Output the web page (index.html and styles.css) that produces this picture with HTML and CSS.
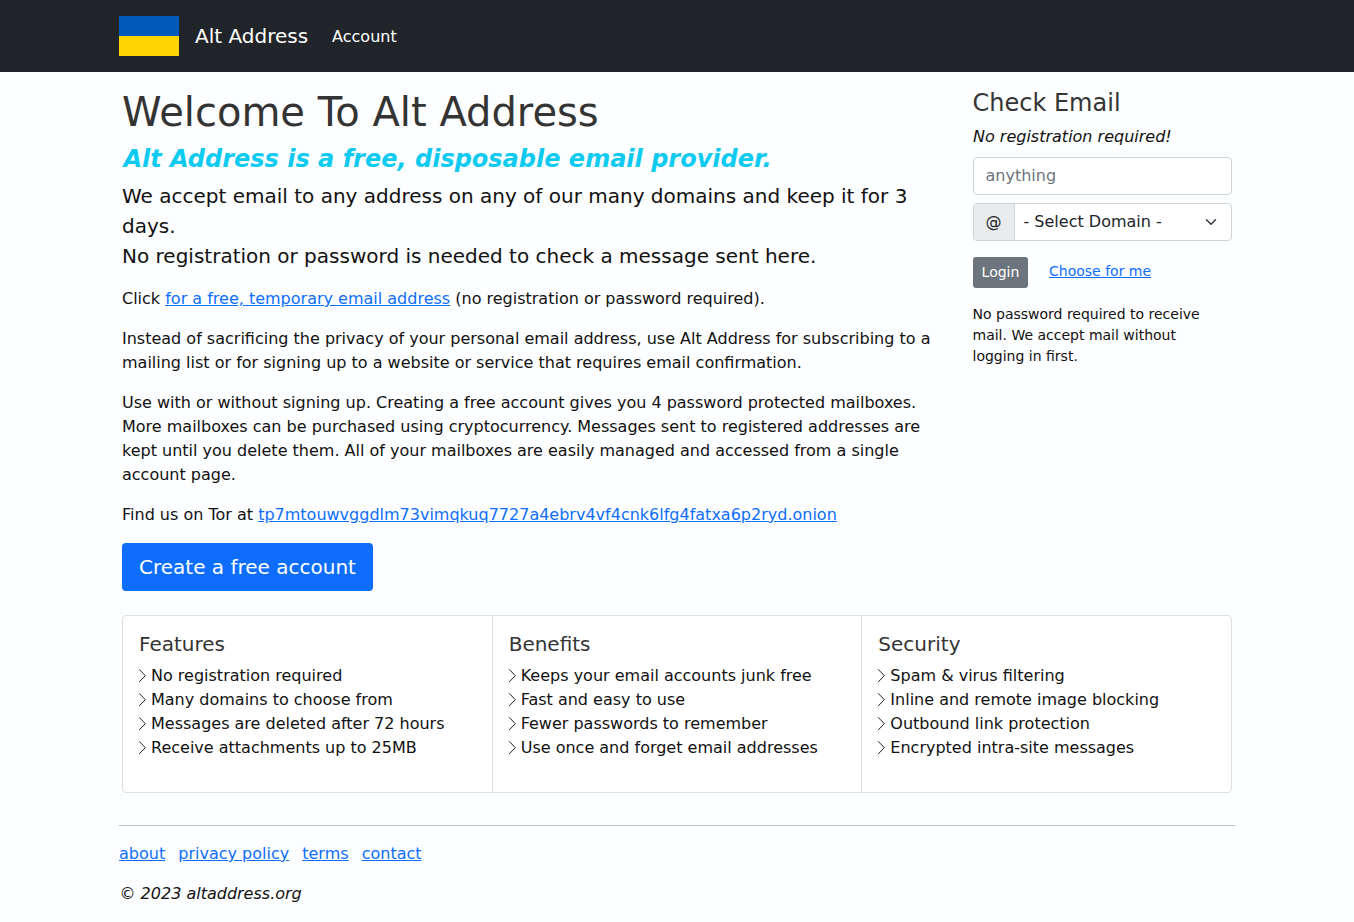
FILE: index.html
```html
<!DOCTYPE html>
<html lang="en">
<head>
<meta charset="utf-8">
<title>Alt Address</title>
<link rel="stylesheet" href="styles.css">
</head>
<body>
<svg class="sprite" aria-hidden="true"><symbol id="chev" viewBox="0 0 16 16"><path fill="none" stroke="#111" stroke-width=".95" stroke-linecap="round" stroke-linejoin="round" d="M4.5 1.7 10.3 7.7l-5.8 6"/></symbol></svg>
<nav class="navbar">
  <div class="navbar-inner">
    <svg class="flag" width="60" height="40" viewBox="0 0 60 40"><path fill="#005bbb" d="M0 0h60v20H0z"/><path fill="#ffd500" d="M0 20h60v20H0z"/></svg>
    <a class="brand" href="#">Alt Address</a>
    <a class="nav-link" href="#">Account</a>
  </div>
</nav>
<div class="container">
  <div class="row">
    <main class="main">
      <h1>Welcome To Alt Address</h1>
      <h2 class="tagline">Alt Address is a free, disposable email provider.</h2>
      <p class="lead">We accept email to any address on any of our many domains and keep it for 3 days.<br>No registration or password is needed to check a message sent here.</p>
      <p>Click <a href="#">for a free, temporary email address</a> (no registration or password required).</p>
      <p>Instead of sacrificing the privacy of your personal email address, use Alt Address for subscribing to a mailing list or for signing up to a website or service that requires email confirmation.</p>
      <p>Use with or without signing up. Creating a free account gives you 4 password protected mailboxes. More mailboxes can be purchased using cryptocurrency. Messages sent to registered addresses are kept until you delete them. All of your mailboxes are easily managed and accessed from a single account page.</p>
      <p>Find us on Tor at <a href="#">tp7mtouwvggdlm73vimqkuq7727a4ebrv4vf4cnk6lfg4fatxa6p2ryd.onion</a></p>
      <a class="btn-create" href="#">Create a free account</a>
    </main>
    <aside class="side">
      <h2 class="side-title">Check Email</h2>
      <p class="note">No registration required!</p>
      <input class="field" type="text" placeholder="anything">
      <div class="group">
        <span class="at">@</span>
        <div class="select"><span>- Select Domain -</span><svg width="16" height="12" viewBox="0 0 16 16"><path fill="none" stroke="#343a40" stroke-linecap="round" stroke-linejoin="round" stroke-width="2" d="m2 5 6 6 6-6"/></svg></div>
      </div>
      <div class="actions"><button class="btn-login">Login</button><a href="#">Choose for me</a></div>
      <p class="small">No password required to receive mail. We accept mail without logging in first.</p>
    </aside>
  </div>
  <div class="cards">
    <section class="card"><h5>Features</h5><ul>
      <li><svg><use href="#chev"/></svg>No registration required</li>
      <li><svg><use href="#chev"/></svg>Many domains to choose from</li>
      <li><svg><use href="#chev"/></svg>Messages are deleted after 72 hours</li>
      <li><svg><use href="#chev"/></svg>Receive attachments up to 25MB</li></ul></section>
    <section class="card"><h5>Benefits</h5><ul>
      <li><svg><use href="#chev"/></svg>Keeps your email accounts junk free</li>
      <li><svg><use href="#chev"/></svg>Fast and easy to use</li>
      <li><svg><use href="#chev"/></svg>Fewer passwords to remember</li>
      <li><svg><use href="#chev"/></svg>Use once and forget email addresses</li></ul></section>
    <section class="card"><h5>Security</h5><ul>
      <li><svg><use href="#chev"/></svg>Spam &amp; virus filtering</li>
      <li><svg><use href="#chev"/></svg>Inline and remote image blocking</li>
      <li><svg><use href="#chev"/></svg>Outbound link protection</li>
      <li><svg><use href="#chev"/></svg>Encrypted intra-site messages</li></ul></section>
  </div>
</div>
<footer class="footer">
  <div class="links"><a href="#">about</a><a href="#">privacy policy</a><a href="#">terms</a><a href="#">contact</a></div>
  <p class="copy">© 2023 altaddress.org</p>
</footer>
</body>
</html>
```
FILE: styles.css
```css
* { box-sizing: border-box; }
body { margin: 0; background: #fdfeff; color: #111; font: 16px/24px "DejaVu Sans", sans-serif; overflow: hidden; }
h1, h2, h5, p, ul { margin: 0; padding: 0; font-weight: 400; }
a { color: #0d6efd; }
.sprite { position: absolute; width: 0; height: 0; }
.navbar { background: #212529; height: 72px; }
.navbar-inner { width: 1116px; height: 72px; margin: 0 auto; display: flex; align-items: center; }
.flag { display: block; margin-right: 16px; }
.brand { color: #fff; font-size: 20px; text-decoration: none; margin-right: 24px; }
.nav-link { color: #fff; text-decoration: none; padding-top: 2px; }
.container { width: 1110px; margin: 0 auto; padding-top: 16px; }
.row { display: flex; justify-content: space-between; }
.main { width: 818px; }
h1 { font-size: 40px; line-height: 48px; margin-bottom: 8px; color: #343434; }
.tagline { font-size: 24px; line-height: 29px; font-weight: 700; font-style: italic; color: #0dcaf0; padding: 1px 0 0 1.4px; margin-bottom: 7px; }
.main p { margin-bottom: 16px; }
.main .lead { font-size: 20px; line-height: 30px; }
.btn-create { display: inline-block; background: #0d6efd; color: #fff; font-size: 20px; line-height: 30px; padding: 9px 17px; border-radius: 4px; text-decoration: none; }
.side { width: 259.5px; }
.side-title { font-size: 24px; line-height: 29px; padding-top: 1px; margin-bottom: 7px; color: #343434; }
.note { font-style: italic; padding-left: .5px; margin-bottom: 8px; }
.field { display: block; width: 100%; height: 38px; border: 1px solid #ced4da; border-radius: 4px; padding: 5px 12px 7px; font: inherit; background: #fff; margin-bottom: 8px; }
.field::placeholder { color: #6c757d; opacity: 1; }
.group { display: flex; height: 38px; border: 1px solid #ced4da; border-radius: 4px; background: #fff; overflow: hidden; margin-bottom: 16px; color: #212529; }
.at { background: #e9ecef; border-right: 1px solid #ced4da; width: 41px; padding: 6px 12px; }
.select { flex: 1; display: flex; align-items: center; justify-content: space-between; padding: 0 12px 0 9px; }
.actions { display: flex; font-size: 14px; line-height: 21px; gap: 21px; align-items: center; margin-bottom: 16px; }
.actions a { margin-top: -3px; }
.btn-login { font: inherit; color: #fff; background: #6c757d; border: 0; border-radius: 3px; height: 31px; width: 55.5px; padding: 0 0 0 .5px; }
.small { font-size: 14px; line-height: 21px; width: 235px; }
.cards { display: flex; height: 178px; margin-top: 24px; border: 1px solid #dfdfdf; border-radius: 4px; background: #fff; }
.card { flex: 1; padding: 16px; }
.card + .card { border-left: 1px solid #dfdfdf; }
.card h5 { font-size: 20px; line-height: 24px; margin-bottom: 8px; color: #343434; }
.card ul { list-style: none; }
.card li { display: flex; align-items: center; white-space: nowrap; }
.card svg { width: 16px; height: 16px; margin: 0 0 0 -4px; }
.footer { width: 1116px; margin: 32px auto 0; border-top: 1px solid #bfc0c1; padding-top: 16px; }
.links { display: flex; gap: 13.08px; }
.copy { font-style: italic; margin: 16px 0 0; padding-left: .5px; }
```
